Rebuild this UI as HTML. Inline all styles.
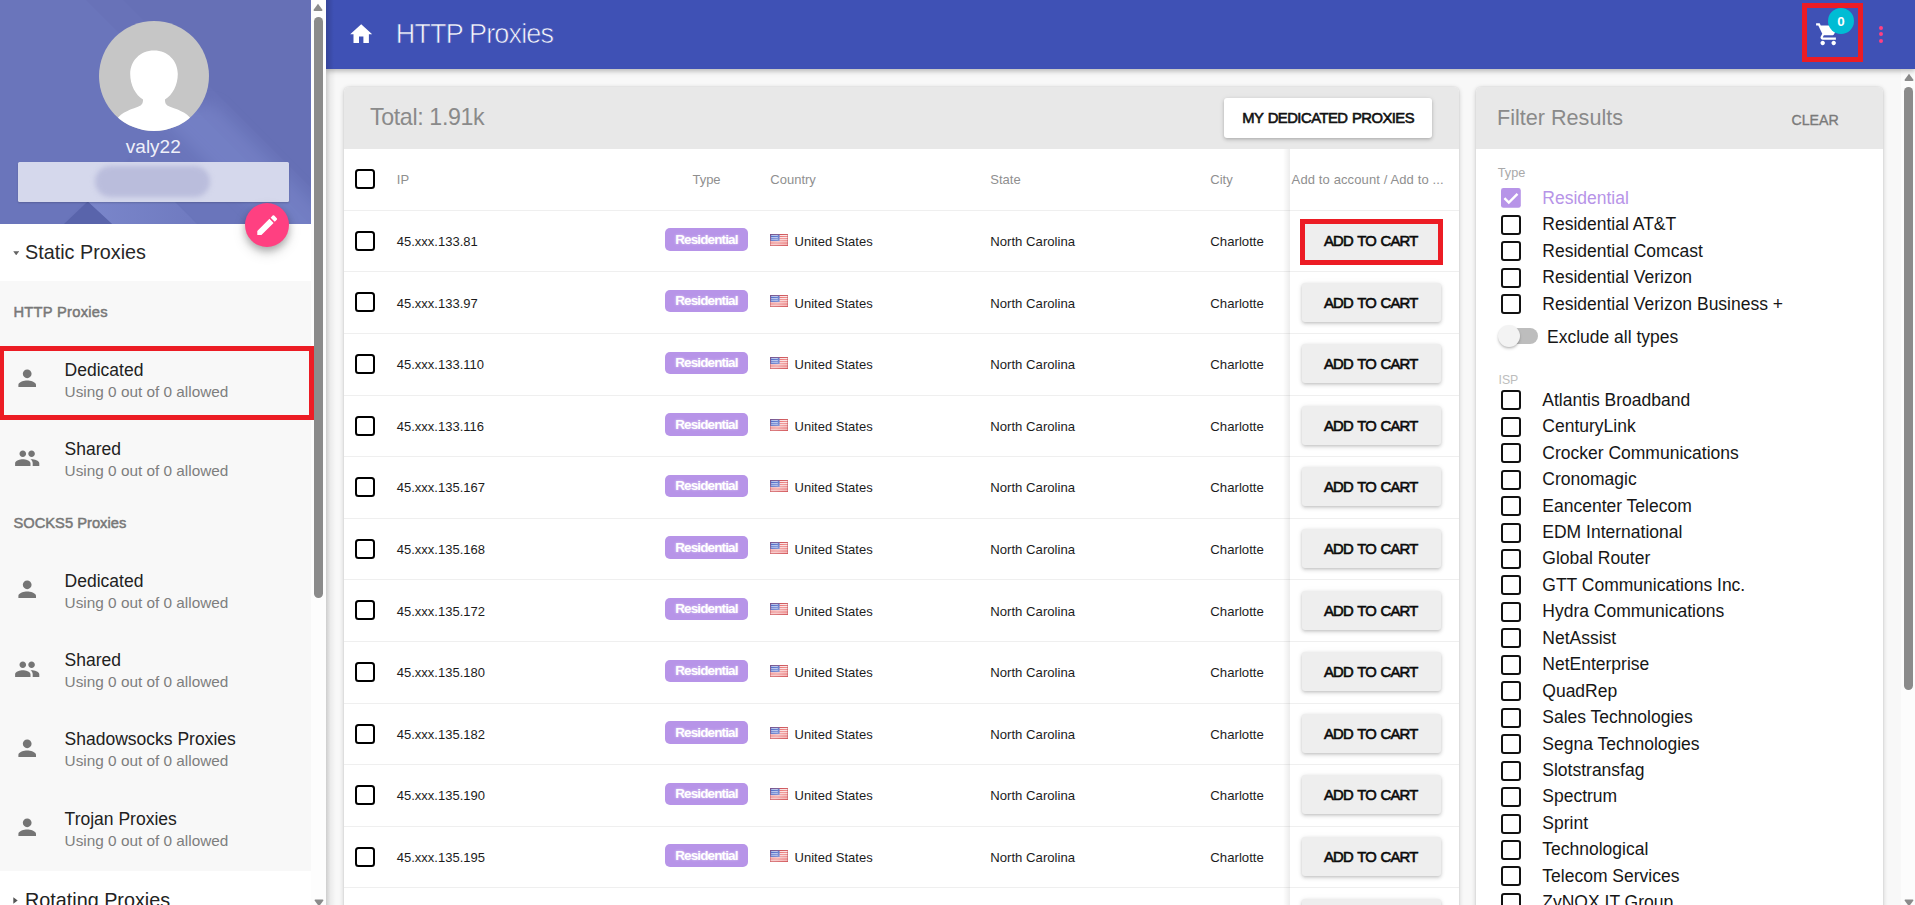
<!DOCTYPE html>
<html lang="en"><head><meta charset="utf-8"><title>HTTP Proxies</title>
<style>
html,body{margin:0;padding:0}
body{width:1915px;height:905px;overflow:hidden;position:relative;background:#fafafa;font-family:"Liberation Sans",Arial,sans-serif;}
div,svg{position:absolute;box-sizing:border-box}
.t{white-space:nowrap;line-height:1}
.m{-webkit-text-stroke:0.35px currentColor}
.m2{-webkit-text-stroke:0.5px currentColor}
.cb{width:19.6px;height:19.6px;border:2.3px solid #111;border-radius:3px;background:#fff}
.cbt{width:20px;height:20px;border:2.4px solid #000;border-radius:3.5px;background:#fff}
.btn{left:1301.5px;width:139px;height:39px;background:#eeeeee;border-radius:3px;box-shadow:0 2px 4px rgba(0,0,0,.15),0 1px 2.5px rgba(0,0,0,.09),0 0 6px rgba(0,0,0,.05)}
.badge{left:665px;width:83px;height:22.4px;background:#b794e8;border-radius:5px}
.sep{left:344px;width:1115px;height:1px;background:#efefef}
.red{border:5px solid #ec1c24}
</style></head><body>

<div style="left:326px;top:0;width:1589px;height:905px;background:#f8f8f8"></div>
<div style="left:326px;top:69px;width:10px;height:836px;background:linear-gradient(90deg,rgba(0,0,0,.17),rgba(0,0,0,.05) 45%,rgba(0,0,0,0))"></div>
<div style="left:344px;top:87px;width:1115px;height:830px;background:#fff;border-radius:5px 5px 0 0;box-shadow:0 1.5px 5px rgba(0,0,0,.2),0 0 1.5px rgba(0,0,0,.12);overflow:hidden"><div style="left:0;top:0;width:1115px;height:62px;background:#e8e8e8"></div></div>
<div class="t" style="top:106px;font-size:23.2px;color:#8a8a8a;left:370.00px;letter-spacing:-0.36px;">Total: 1.91k</div>
<div style="left:1224px;top:98px;width:208px;height:40px;background:#fff;border-radius:3px;box-shadow:0 2px 4px rgba(0,0,0,.15),0 1px 2.5px rgba(0,0,0,.09),0 0 6px rgba(0,0,0,.05)"></div>
<div class="t" style="top:111px;font-size:14.8px;color:#111;left:1328.20px;transform:translateX(-50%);letter-spacing:-0.52px;-webkit-text-stroke:0.6px #111;word-spacing:0.9px;">MY DEDICATED PROXIES</div>
<div class="cbt" style="left:355px;top:169px"></div>
<div class="t" style="top:173px;font-size:13px;color:#8f8f8f;left:396.80px;">IP</div>
<div class="t" style="top:173px;font-size:13px;color:#8f8f8f;left:706.50px;transform:translateX(-50%);">Type</div>
<div class="t" style="top:173px;font-size:13px;color:#8f8f8f;left:770.30px;">Country</div>
<div class="t" style="top:173px;font-size:13px;color:#8f8f8f;left:990.30px;">State</div>
<div class="t" style="top:173px;font-size:13px;color:#8f8f8f;left:1210.30px;">City</div>
<div class="t" style="top:173px;font-size:13px;color:#8f8f8f;left:1291.60px;letter-spacing:0.12px;">Add to account / Add to ...</div>
<div class="sep" style="top:210px"></div>
<div class="cbt" style="left:355px;top:231px"></div>
<div class="t" style="top:235px;font-size:13px;color:#1c1c1c;left:396.80px;">45.xxx.133.81</div>
<div class="badge" style="top:228.40px"></div>
<div class="t" style="top:233px;font-size:13.4px;color:#fff;left:706.40px;transform:translateX(-50%);font-weight:700;letter-spacing:-0.82px;text-shadow:0 0 2.5px rgba(255,255,255,.6)">Residential</div>
<svg style="left:770px;top:233.70px" width="18" height="12.2" viewBox="0 0 18 12.2"><defs><linearGradient id="fg0" x1="0" y1="0" x2="1" y2="1"><stop offset="0" stop-color="#fff" stop-opacity="0"/><stop offset=".55" stop-color="#fff" stop-opacity=".38"/><stop offset="1" stop-color="#fff" stop-opacity=".05"/></linearGradient></defs><rect width="18" height="12.2" fill="#fff"/><g fill="#e03535"><rect y="0" width="18" height="1.1"/><rect y="1.9" width="18" height="1"/><rect y="3.8" width="18" height="1"/><rect y="5.7" width="18" height="1"/><rect y="7.6" width="18" height="1"/><rect y="9.4" width="18" height="1"/><rect y="11.2" width="18" height="1"/></g><rect width="9.6" height="7" fill="#3f5ec2"/><g fill="#c9d3f2"><rect x="1.2" y="1.2" width="6.6" height=".8"/><rect x="1.2" y="3" width="6.6" height=".8"/><rect x="1.2" y="4.8" width="6.6" height=".8"/></g><rect width="18" height="12.2" fill="url(#fg0)"/><rect x=".4" y=".4" width="17.2" height="11.4" fill="none" stroke="#b34b55" stroke-opacity=".55" stroke-width=".8"/></svg>
<div class="t" style="top:235px;font-size:13px;color:#1c1c1c;left:794.60px;">United States</div>
<div class="t" style="top:235px;font-size:13.15px;color:#1c1c1c;left:990.30px;">North Carolina</div>
<div class="t" style="top:235px;font-size:13.2px;color:#1c1c1c;left:1210.30px;">Charlotte</div>
<div class="sep" style="top:271px"></div>
<div class="cbt" style="left:355px;top:292px"></div>
<div class="t" style="top:297px;font-size:13px;color:#1c1c1c;left:396.80px;">45.xxx.133.97</div>
<div class="badge" style="top:290.00px"></div>
<div class="t" style="top:294px;font-size:13.4px;color:#fff;left:706.40px;transform:translateX(-50%);font-weight:700;letter-spacing:-0.82px;text-shadow:0 0 2.5px rgba(255,255,255,.6)">Residential</div>
<svg style="left:770px;top:295.30px" width="18" height="12.2" viewBox="0 0 18 12.2"><defs><linearGradient id="fg1" x1="0" y1="0" x2="1" y2="1"><stop offset="0" stop-color="#fff" stop-opacity="0"/><stop offset=".55" stop-color="#fff" stop-opacity=".38"/><stop offset="1" stop-color="#fff" stop-opacity=".05"/></linearGradient></defs><rect width="18" height="12.2" fill="#fff"/><g fill="#e03535"><rect y="0" width="18" height="1.1"/><rect y="1.9" width="18" height="1"/><rect y="3.8" width="18" height="1"/><rect y="5.7" width="18" height="1"/><rect y="7.6" width="18" height="1"/><rect y="9.4" width="18" height="1"/><rect y="11.2" width="18" height="1"/></g><rect width="9.6" height="7" fill="#3f5ec2"/><g fill="#c9d3f2"><rect x="1.2" y="1.2" width="6.6" height=".8"/><rect x="1.2" y="3" width="6.6" height=".8"/><rect x="1.2" y="4.8" width="6.6" height=".8"/></g><rect width="18" height="12.2" fill="url(#fg1)"/><rect x=".4" y=".4" width="17.2" height="11.4" fill="none" stroke="#b34b55" stroke-opacity=".55" stroke-width=".8"/></svg>
<div class="t" style="top:297px;font-size:13px;color:#1c1c1c;left:794.60px;">United States</div>
<div class="t" style="top:297px;font-size:13.15px;color:#1c1c1c;left:990.30px;">North Carolina</div>
<div class="t" style="top:297px;font-size:13.2px;color:#1c1c1c;left:1210.30px;">Charlotte</div>
<div class="sep" style="top:333px"></div>
<div class="cbt" style="left:355px;top:354px"></div>
<div class="t" style="top:358px;font-size:13px;color:#1c1c1c;left:396.80px;">45.xxx.133.110</div>
<div class="badge" style="top:351.60px"></div>
<div class="t" style="top:356px;font-size:13.4px;color:#fff;left:706.40px;transform:translateX(-50%);font-weight:700;letter-spacing:-0.82px;text-shadow:0 0 2.5px rgba(255,255,255,.6)">Residential</div>
<svg style="left:770px;top:356.90px" width="18" height="12.2" viewBox="0 0 18 12.2"><defs><linearGradient id="fg2" x1="0" y1="0" x2="1" y2="1"><stop offset="0" stop-color="#fff" stop-opacity="0"/><stop offset=".55" stop-color="#fff" stop-opacity=".38"/><stop offset="1" stop-color="#fff" stop-opacity=".05"/></linearGradient></defs><rect width="18" height="12.2" fill="#fff"/><g fill="#e03535"><rect y="0" width="18" height="1.1"/><rect y="1.9" width="18" height="1"/><rect y="3.8" width="18" height="1"/><rect y="5.7" width="18" height="1"/><rect y="7.6" width="18" height="1"/><rect y="9.4" width="18" height="1"/><rect y="11.2" width="18" height="1"/></g><rect width="9.6" height="7" fill="#3f5ec2"/><g fill="#c9d3f2"><rect x="1.2" y="1.2" width="6.6" height=".8"/><rect x="1.2" y="3" width="6.6" height=".8"/><rect x="1.2" y="4.8" width="6.6" height=".8"/></g><rect width="18" height="12.2" fill="url(#fg2)"/><rect x=".4" y=".4" width="17.2" height="11.4" fill="none" stroke="#b34b55" stroke-opacity=".55" stroke-width=".8"/></svg>
<div class="t" style="top:358px;font-size:13px;color:#1c1c1c;left:794.60px;">United States</div>
<div class="t" style="top:358px;font-size:13.15px;color:#1c1c1c;left:990.30px;">North Carolina</div>
<div class="t" style="top:358px;font-size:13.2px;color:#1c1c1c;left:1210.30px;">Charlotte</div>
<div class="sep" style="top:395px"></div>
<div class="cbt" style="left:355px;top:416px"></div>
<div class="t" style="top:420px;font-size:13px;color:#1c1c1c;left:396.80px;">45.xxx.133.116</div>
<div class="badge" style="top:413.20px"></div>
<div class="t" style="top:418px;font-size:13.4px;color:#fff;left:706.40px;transform:translateX(-50%);font-weight:700;letter-spacing:-0.82px;text-shadow:0 0 2.5px rgba(255,255,255,.6)">Residential</div>
<svg style="left:770px;top:418.50px" width="18" height="12.2" viewBox="0 0 18 12.2"><defs><linearGradient id="fg3" x1="0" y1="0" x2="1" y2="1"><stop offset="0" stop-color="#fff" stop-opacity="0"/><stop offset=".55" stop-color="#fff" stop-opacity=".38"/><stop offset="1" stop-color="#fff" stop-opacity=".05"/></linearGradient></defs><rect width="18" height="12.2" fill="#fff"/><g fill="#e03535"><rect y="0" width="18" height="1.1"/><rect y="1.9" width="18" height="1"/><rect y="3.8" width="18" height="1"/><rect y="5.7" width="18" height="1"/><rect y="7.6" width="18" height="1"/><rect y="9.4" width="18" height="1"/><rect y="11.2" width="18" height="1"/></g><rect width="9.6" height="7" fill="#3f5ec2"/><g fill="#c9d3f2"><rect x="1.2" y="1.2" width="6.6" height=".8"/><rect x="1.2" y="3" width="6.6" height=".8"/><rect x="1.2" y="4.8" width="6.6" height=".8"/></g><rect width="18" height="12.2" fill="url(#fg3)"/><rect x=".4" y=".4" width="17.2" height="11.4" fill="none" stroke="#b34b55" stroke-opacity=".55" stroke-width=".8"/></svg>
<div class="t" style="top:420px;font-size:13px;color:#1c1c1c;left:794.60px;">United States</div>
<div class="t" style="top:420px;font-size:13.15px;color:#1c1c1c;left:990.30px;">North Carolina</div>
<div class="t" style="top:420px;font-size:13.2px;color:#1c1c1c;left:1210.30px;">Charlotte</div>
<div class="sep" style="top:456px"></div>
<div class="cbt" style="left:355px;top:477px"></div>
<div class="t" style="top:481px;font-size:13px;color:#1c1c1c;left:396.80px;">45.xxx.135.167</div>
<div class="badge" style="top:474.80px"></div>
<div class="t" style="top:479px;font-size:13.4px;color:#fff;left:706.40px;transform:translateX(-50%);font-weight:700;letter-spacing:-0.82px;text-shadow:0 0 2.5px rgba(255,255,255,.6)">Residential</div>
<svg style="left:770px;top:480.10px" width="18" height="12.2" viewBox="0 0 18 12.2"><defs><linearGradient id="fg4" x1="0" y1="0" x2="1" y2="1"><stop offset="0" stop-color="#fff" stop-opacity="0"/><stop offset=".55" stop-color="#fff" stop-opacity=".38"/><stop offset="1" stop-color="#fff" stop-opacity=".05"/></linearGradient></defs><rect width="18" height="12.2" fill="#fff"/><g fill="#e03535"><rect y="0" width="18" height="1.1"/><rect y="1.9" width="18" height="1"/><rect y="3.8" width="18" height="1"/><rect y="5.7" width="18" height="1"/><rect y="7.6" width="18" height="1"/><rect y="9.4" width="18" height="1"/><rect y="11.2" width="18" height="1"/></g><rect width="9.6" height="7" fill="#3f5ec2"/><g fill="#c9d3f2"><rect x="1.2" y="1.2" width="6.6" height=".8"/><rect x="1.2" y="3" width="6.6" height=".8"/><rect x="1.2" y="4.8" width="6.6" height=".8"/></g><rect width="18" height="12.2" fill="url(#fg4)"/><rect x=".4" y=".4" width="17.2" height="11.4" fill="none" stroke="#b34b55" stroke-opacity=".55" stroke-width=".8"/></svg>
<div class="t" style="top:481px;font-size:13px;color:#1c1c1c;left:794.60px;">United States</div>
<div class="t" style="top:481px;font-size:13.15px;color:#1c1c1c;left:990.30px;">North Carolina</div>
<div class="t" style="top:481px;font-size:13.2px;color:#1c1c1c;left:1210.30px;">Charlotte</div>
<div class="sep" style="top:518px"></div>
<div class="cbt" style="left:355px;top:539px"></div>
<div class="t" style="top:543px;font-size:13px;color:#1c1c1c;left:396.80px;">45.xxx.135.168</div>
<div class="badge" style="top:536.40px"></div>
<div class="t" style="top:541px;font-size:13.4px;color:#fff;left:706.40px;transform:translateX(-50%);font-weight:700;letter-spacing:-0.82px;text-shadow:0 0 2.5px rgba(255,255,255,.6)">Residential</div>
<svg style="left:770px;top:541.70px" width="18" height="12.2" viewBox="0 0 18 12.2"><defs><linearGradient id="fg5" x1="0" y1="0" x2="1" y2="1"><stop offset="0" stop-color="#fff" stop-opacity="0"/><stop offset=".55" stop-color="#fff" stop-opacity=".38"/><stop offset="1" stop-color="#fff" stop-opacity=".05"/></linearGradient></defs><rect width="18" height="12.2" fill="#fff"/><g fill="#e03535"><rect y="0" width="18" height="1.1"/><rect y="1.9" width="18" height="1"/><rect y="3.8" width="18" height="1"/><rect y="5.7" width="18" height="1"/><rect y="7.6" width="18" height="1"/><rect y="9.4" width="18" height="1"/><rect y="11.2" width="18" height="1"/></g><rect width="9.6" height="7" fill="#3f5ec2"/><g fill="#c9d3f2"><rect x="1.2" y="1.2" width="6.6" height=".8"/><rect x="1.2" y="3" width="6.6" height=".8"/><rect x="1.2" y="4.8" width="6.6" height=".8"/></g><rect width="18" height="12.2" fill="url(#fg5)"/><rect x=".4" y=".4" width="17.2" height="11.4" fill="none" stroke="#b34b55" stroke-opacity=".55" stroke-width=".8"/></svg>
<div class="t" style="top:543px;font-size:13px;color:#1c1c1c;left:794.60px;">United States</div>
<div class="t" style="top:543px;font-size:13.15px;color:#1c1c1c;left:990.30px;">North Carolina</div>
<div class="t" style="top:543px;font-size:13.2px;color:#1c1c1c;left:1210.30px;">Charlotte</div>
<div class="sep" style="top:579px"></div>
<div class="cbt" style="left:355px;top:600px"></div>
<div class="t" style="top:605px;font-size:13px;color:#1c1c1c;left:396.80px;">45.xxx.135.172</div>
<div class="badge" style="top:598.00px"></div>
<div class="t" style="top:602px;font-size:13.4px;color:#fff;left:706.40px;transform:translateX(-50%);font-weight:700;letter-spacing:-0.82px;text-shadow:0 0 2.5px rgba(255,255,255,.6)">Residential</div>
<svg style="left:770px;top:603.30px" width="18" height="12.2" viewBox="0 0 18 12.2"><defs><linearGradient id="fg6" x1="0" y1="0" x2="1" y2="1"><stop offset="0" stop-color="#fff" stop-opacity="0"/><stop offset=".55" stop-color="#fff" stop-opacity=".38"/><stop offset="1" stop-color="#fff" stop-opacity=".05"/></linearGradient></defs><rect width="18" height="12.2" fill="#fff"/><g fill="#e03535"><rect y="0" width="18" height="1.1"/><rect y="1.9" width="18" height="1"/><rect y="3.8" width="18" height="1"/><rect y="5.7" width="18" height="1"/><rect y="7.6" width="18" height="1"/><rect y="9.4" width="18" height="1"/><rect y="11.2" width="18" height="1"/></g><rect width="9.6" height="7" fill="#3f5ec2"/><g fill="#c9d3f2"><rect x="1.2" y="1.2" width="6.6" height=".8"/><rect x="1.2" y="3" width="6.6" height=".8"/><rect x="1.2" y="4.8" width="6.6" height=".8"/></g><rect width="18" height="12.2" fill="url(#fg6)"/><rect x=".4" y=".4" width="17.2" height="11.4" fill="none" stroke="#b34b55" stroke-opacity=".55" stroke-width=".8"/></svg>
<div class="t" style="top:605px;font-size:13px;color:#1c1c1c;left:794.60px;">United States</div>
<div class="t" style="top:605px;font-size:13.15px;color:#1c1c1c;left:990.30px;">North Carolina</div>
<div class="t" style="top:605px;font-size:13.2px;color:#1c1c1c;left:1210.30px;">Charlotte</div>
<div class="sep" style="top:641px"></div>
<div class="cbt" style="left:355px;top:662px"></div>
<div class="t" style="top:666px;font-size:13px;color:#1c1c1c;left:396.80px;">45.xxx.135.180</div>
<div class="badge" style="top:659.60px"></div>
<div class="t" style="top:664px;font-size:13.4px;color:#fff;left:706.40px;transform:translateX(-50%);font-weight:700;letter-spacing:-0.82px;text-shadow:0 0 2.5px rgba(255,255,255,.6)">Residential</div>
<svg style="left:770px;top:664.90px" width="18" height="12.2" viewBox="0 0 18 12.2"><defs><linearGradient id="fg7" x1="0" y1="0" x2="1" y2="1"><stop offset="0" stop-color="#fff" stop-opacity="0"/><stop offset=".55" stop-color="#fff" stop-opacity=".38"/><stop offset="1" stop-color="#fff" stop-opacity=".05"/></linearGradient></defs><rect width="18" height="12.2" fill="#fff"/><g fill="#e03535"><rect y="0" width="18" height="1.1"/><rect y="1.9" width="18" height="1"/><rect y="3.8" width="18" height="1"/><rect y="5.7" width="18" height="1"/><rect y="7.6" width="18" height="1"/><rect y="9.4" width="18" height="1"/><rect y="11.2" width="18" height="1"/></g><rect width="9.6" height="7" fill="#3f5ec2"/><g fill="#c9d3f2"><rect x="1.2" y="1.2" width="6.6" height=".8"/><rect x="1.2" y="3" width="6.6" height=".8"/><rect x="1.2" y="4.8" width="6.6" height=".8"/></g><rect width="18" height="12.2" fill="url(#fg7)"/><rect x=".4" y=".4" width="17.2" height="11.4" fill="none" stroke="#b34b55" stroke-opacity=".55" stroke-width=".8"/></svg>
<div class="t" style="top:666px;font-size:13px;color:#1c1c1c;left:794.60px;">United States</div>
<div class="t" style="top:666px;font-size:13.15px;color:#1c1c1c;left:990.30px;">North Carolina</div>
<div class="t" style="top:666px;font-size:13.2px;color:#1c1c1c;left:1210.30px;">Charlotte</div>
<div class="sep" style="top:703px"></div>
<div class="cbt" style="left:355px;top:724px"></div>
<div class="t" style="top:728px;font-size:13px;color:#1c1c1c;left:396.80px;">45.xxx.135.182</div>
<div class="badge" style="top:721.20px"></div>
<div class="t" style="top:726px;font-size:13.4px;color:#fff;left:706.40px;transform:translateX(-50%);font-weight:700;letter-spacing:-0.82px;text-shadow:0 0 2.5px rgba(255,255,255,.6)">Residential</div>
<svg style="left:770px;top:726.50px" width="18" height="12.2" viewBox="0 0 18 12.2"><defs><linearGradient id="fg8" x1="0" y1="0" x2="1" y2="1"><stop offset="0" stop-color="#fff" stop-opacity="0"/><stop offset=".55" stop-color="#fff" stop-opacity=".38"/><stop offset="1" stop-color="#fff" stop-opacity=".05"/></linearGradient></defs><rect width="18" height="12.2" fill="#fff"/><g fill="#e03535"><rect y="0" width="18" height="1.1"/><rect y="1.9" width="18" height="1"/><rect y="3.8" width="18" height="1"/><rect y="5.7" width="18" height="1"/><rect y="7.6" width="18" height="1"/><rect y="9.4" width="18" height="1"/><rect y="11.2" width="18" height="1"/></g><rect width="9.6" height="7" fill="#3f5ec2"/><g fill="#c9d3f2"><rect x="1.2" y="1.2" width="6.6" height=".8"/><rect x="1.2" y="3" width="6.6" height=".8"/><rect x="1.2" y="4.8" width="6.6" height=".8"/></g><rect width="18" height="12.2" fill="url(#fg8)"/><rect x=".4" y=".4" width="17.2" height="11.4" fill="none" stroke="#b34b55" stroke-opacity=".55" stroke-width=".8"/></svg>
<div class="t" style="top:728px;font-size:13px;color:#1c1c1c;left:794.60px;">United States</div>
<div class="t" style="top:728px;font-size:13.15px;color:#1c1c1c;left:990.30px;">North Carolina</div>
<div class="t" style="top:728px;font-size:13.2px;color:#1c1c1c;left:1210.30px;">Charlotte</div>
<div class="sep" style="top:764px"></div>
<div class="cbt" style="left:355px;top:785px"></div>
<div class="t" style="top:789px;font-size:13px;color:#1c1c1c;left:396.80px;">45.xxx.135.190</div>
<div class="badge" style="top:782.80px"></div>
<div class="t" style="top:787px;font-size:13.4px;color:#fff;left:706.40px;transform:translateX(-50%);font-weight:700;letter-spacing:-0.82px;text-shadow:0 0 2.5px rgba(255,255,255,.6)">Residential</div>
<svg style="left:770px;top:788.10px" width="18" height="12.2" viewBox="0 0 18 12.2"><defs><linearGradient id="fg9" x1="0" y1="0" x2="1" y2="1"><stop offset="0" stop-color="#fff" stop-opacity="0"/><stop offset=".55" stop-color="#fff" stop-opacity=".38"/><stop offset="1" stop-color="#fff" stop-opacity=".05"/></linearGradient></defs><rect width="18" height="12.2" fill="#fff"/><g fill="#e03535"><rect y="0" width="18" height="1.1"/><rect y="1.9" width="18" height="1"/><rect y="3.8" width="18" height="1"/><rect y="5.7" width="18" height="1"/><rect y="7.6" width="18" height="1"/><rect y="9.4" width="18" height="1"/><rect y="11.2" width="18" height="1"/></g><rect width="9.6" height="7" fill="#3f5ec2"/><g fill="#c9d3f2"><rect x="1.2" y="1.2" width="6.6" height=".8"/><rect x="1.2" y="3" width="6.6" height=".8"/><rect x="1.2" y="4.8" width="6.6" height=".8"/></g><rect width="18" height="12.2" fill="url(#fg9)"/><rect x=".4" y=".4" width="17.2" height="11.4" fill="none" stroke="#b34b55" stroke-opacity=".55" stroke-width=".8"/></svg>
<div class="t" style="top:789px;font-size:13px;color:#1c1c1c;left:794.60px;">United States</div>
<div class="t" style="top:789px;font-size:13.15px;color:#1c1c1c;left:990.30px;">North Carolina</div>
<div class="t" style="top:789px;font-size:13.2px;color:#1c1c1c;left:1210.30px;">Charlotte</div>
<div class="sep" style="top:826px"></div>
<div class="cbt" style="left:355px;top:847px"></div>
<div class="t" style="top:851px;font-size:13px;color:#1c1c1c;left:396.80px;">45.xxx.135.195</div>
<div class="badge" style="top:844.40px"></div>
<div class="t" style="top:849px;font-size:13.4px;color:#fff;left:706.40px;transform:translateX(-50%);font-weight:700;letter-spacing:-0.82px;text-shadow:0 0 2.5px rgba(255,255,255,.6)">Residential</div>
<svg style="left:770px;top:849.70px" width="18" height="12.2" viewBox="0 0 18 12.2"><defs><linearGradient id="fg10" x1="0" y1="0" x2="1" y2="1"><stop offset="0" stop-color="#fff" stop-opacity="0"/><stop offset=".55" stop-color="#fff" stop-opacity=".38"/><stop offset="1" stop-color="#fff" stop-opacity=".05"/></linearGradient></defs><rect width="18" height="12.2" fill="#fff"/><g fill="#e03535"><rect y="0" width="18" height="1.1"/><rect y="1.9" width="18" height="1"/><rect y="3.8" width="18" height="1"/><rect y="5.7" width="18" height="1"/><rect y="7.6" width="18" height="1"/><rect y="9.4" width="18" height="1"/><rect y="11.2" width="18" height="1"/></g><rect width="9.6" height="7" fill="#3f5ec2"/><g fill="#c9d3f2"><rect x="1.2" y="1.2" width="6.6" height=".8"/><rect x="1.2" y="3" width="6.6" height=".8"/><rect x="1.2" y="4.8" width="6.6" height=".8"/></g><rect width="18" height="12.2" fill="url(#fg10)"/><rect x=".4" y=".4" width="17.2" height="11.4" fill="none" stroke="#b34b55" stroke-opacity=".55" stroke-width=".8"/></svg>
<div class="t" style="top:851px;font-size:13px;color:#1c1c1c;left:794.60px;">United States</div>
<div class="t" style="top:851px;font-size:13.15px;color:#1c1c1c;left:990.30px;">North Carolina</div>
<div class="t" style="top:851px;font-size:13.2px;color:#1c1c1c;left:1210.30px;">Charlotte</div>
<div class="sep" style="top:887px"></div>
<div class="cbt" style="left:355px;top:908px"></div>
<div class="t" style="top:913px;font-size:13px;color:#1c1c1c;left:396.80px;">45.xxx.135.201</div>
<div class="badge" style="top:906.00px"></div>
<div class="t" style="top:910px;font-size:13.4px;color:#fff;left:706.40px;transform:translateX(-50%);font-weight:700;letter-spacing:-0.82px;text-shadow:0 0 2.5px rgba(255,255,255,.6)">Residential</div>
<svg style="left:770px;top:911.30px" width="18" height="12.2" viewBox="0 0 18 12.2"><defs><linearGradient id="fg11" x1="0" y1="0" x2="1" y2="1"><stop offset="0" stop-color="#fff" stop-opacity="0"/><stop offset=".55" stop-color="#fff" stop-opacity=".38"/><stop offset="1" stop-color="#fff" stop-opacity=".05"/></linearGradient></defs><rect width="18" height="12.2" fill="#fff"/><g fill="#e03535"><rect y="0" width="18" height="1.1"/><rect y="1.9" width="18" height="1"/><rect y="3.8" width="18" height="1"/><rect y="5.7" width="18" height="1"/><rect y="7.6" width="18" height="1"/><rect y="9.4" width="18" height="1"/><rect y="11.2" width="18" height="1"/></g><rect width="9.6" height="7" fill="#3f5ec2"/><g fill="#c9d3f2"><rect x="1.2" y="1.2" width="6.6" height=".8"/><rect x="1.2" y="3" width="6.6" height=".8"/><rect x="1.2" y="4.8" width="6.6" height=".8"/></g><rect width="18" height="12.2" fill="url(#fg11)"/><rect x=".4" y=".4" width="17.2" height="11.4" fill="none" stroke="#b34b55" stroke-opacity=".55" stroke-width=".8"/></svg>
<div class="t" style="top:913px;font-size:13px;color:#1c1c1c;left:794.60px;">United States</div>
<div class="t" style="top:913px;font-size:13.15px;color:#1c1c1c;left:990.30px;">North Carolina</div>
<div class="t" style="top:913px;font-size:13.2px;color:#1c1c1c;left:1210.30px;">Charlotte</div>
<div style="left:1283px;top:149px;width:7px;height:760px;background:linear-gradient(90deg,rgba(0,0,0,0),rgba(0,0,0,.075))"></div>
<div style="left:1290px;top:149px;width:169px;height:760px;background:#fff"></div>
<div class="t" style="top:173px;font-size:13px;color:#8f8f8f;left:1291.60px;letter-spacing:0.12px;">Add to account / Add to ...</div>
<div class="sep" style="top:210px;left:1290px;width:169px"></div>
<div style="left:1305px;top:224px;width:133px;height:36px;background:#eee"></div>
<div class="red" style="left:1300px;top:219px;width:143px;height:46px"></div>
<div class="t" style="top:234px;font-size:14.8px;color:#0a0a0a;left:1370.80px;transform:translateX(-50%);letter-spacing:-0.68px;-webkit-text-stroke:0.6px #0a0a0a;word-spacing:0.9px;">ADD TO CART</div>
<div class="sep" style="top:271px;left:1290px;width:169px"></div>
<div class="btn" style="top:282.60px"></div>
<div class="t" style="top:296px;font-size:14.8px;color:#0a0a0a;left:1370.80px;transform:translateX(-50%);letter-spacing:-0.68px;-webkit-text-stroke:0.6px #0a0a0a;word-spacing:0.9px;">ADD TO CART</div>
<div class="sep" style="top:333px;left:1290px;width:169px"></div>
<div class="btn" style="top:344.20px"></div>
<div class="t" style="top:357px;font-size:14.8px;color:#0a0a0a;left:1370.80px;transform:translateX(-50%);letter-spacing:-0.68px;-webkit-text-stroke:0.6px #0a0a0a;word-spacing:0.9px;">ADD TO CART</div>
<div class="sep" style="top:395px;left:1290px;width:169px"></div>
<div class="btn" style="top:405.80px"></div>
<div class="t" style="top:419px;font-size:14.8px;color:#0a0a0a;left:1370.80px;transform:translateX(-50%);letter-spacing:-0.68px;-webkit-text-stroke:0.6px #0a0a0a;word-spacing:0.9px;">ADD TO CART</div>
<div class="sep" style="top:456px;left:1290px;width:169px"></div>
<div class="btn" style="top:467.40px"></div>
<div class="t" style="top:480px;font-size:14.8px;color:#0a0a0a;left:1370.80px;transform:translateX(-50%);letter-spacing:-0.68px;-webkit-text-stroke:0.6px #0a0a0a;word-spacing:0.9px;">ADD TO CART</div>
<div class="sep" style="top:518px;left:1290px;width:169px"></div>
<div class="btn" style="top:529.00px"></div>
<div class="t" style="top:542px;font-size:14.8px;color:#0a0a0a;left:1370.80px;transform:translateX(-50%);letter-spacing:-0.68px;-webkit-text-stroke:0.6px #0a0a0a;word-spacing:0.9px;">ADD TO CART</div>
<div class="sep" style="top:579px;left:1290px;width:169px"></div>
<div class="btn" style="top:590.60px"></div>
<div class="t" style="top:604px;font-size:14.8px;color:#0a0a0a;left:1370.80px;transform:translateX(-50%);letter-spacing:-0.68px;-webkit-text-stroke:0.6px #0a0a0a;word-spacing:0.9px;">ADD TO CART</div>
<div class="sep" style="top:641px;left:1290px;width:169px"></div>
<div class="btn" style="top:652.20px"></div>
<div class="t" style="top:665px;font-size:14.8px;color:#0a0a0a;left:1370.80px;transform:translateX(-50%);letter-spacing:-0.68px;-webkit-text-stroke:0.6px #0a0a0a;word-spacing:0.9px;">ADD TO CART</div>
<div class="sep" style="top:703px;left:1290px;width:169px"></div>
<div class="btn" style="top:713.80px"></div>
<div class="t" style="top:727px;font-size:14.8px;color:#0a0a0a;left:1370.80px;transform:translateX(-50%);letter-spacing:-0.68px;-webkit-text-stroke:0.6px #0a0a0a;word-spacing:0.9px;">ADD TO CART</div>
<div class="sep" style="top:764px;left:1290px;width:169px"></div>
<div class="btn" style="top:775.40px"></div>
<div class="t" style="top:788px;font-size:14.8px;color:#0a0a0a;left:1370.80px;transform:translateX(-50%);letter-spacing:-0.68px;-webkit-text-stroke:0.6px #0a0a0a;word-spacing:0.9px;">ADD TO CART</div>
<div class="sep" style="top:826px;left:1290px;width:169px"></div>
<div class="btn" style="top:837.00px"></div>
<div class="t" style="top:850px;font-size:14.8px;color:#0a0a0a;left:1370.80px;transform:translateX(-50%);letter-spacing:-0.68px;-webkit-text-stroke:0.6px #0a0a0a;word-spacing:0.9px;">ADD TO CART</div>
<div class="sep" style="top:887px;left:1290px;width:169px"></div>
<div class="btn" style="top:898.60px"></div>
<div class="t" style="top:912px;font-size:14.8px;color:#0a0a0a;left:1370.80px;transform:translateX(-50%);letter-spacing:-0.68px;-webkit-text-stroke:0.6px #0a0a0a;word-spacing:0.9px;">ADD TO CART</div>
<div style="left:1476px;top:87px;width:407px;height:830px;background:#fff;border-radius:5px 5px 0 0;box-shadow:0 1.5px 5px rgba(0,0,0,.2),0 0 1.5px rgba(0,0,0,.12);overflow:hidden"><div style="left:0;top:0;width:408px;height:62px;background:#e8e8e8"></div></div>
<div class="t" style="top:107px;font-size:21.6px;color:#8a8a8a;left:1497.00px;">Filter Results</div>
<div class="t m" style="top:113px;font-size:14.2px;color:#7a7a7a;left:1791.40px;">CLEAR</div>
<div class="t" style="top:167px;font-size:12.7px;color:#a9a9a9;left:1497.80px;">Type</div>
<svg style="left:1501.2px;top:188.20px" width="19.8" height="19.8" viewBox="0 0 18 18"><rect width="18" height="18" rx="2.2" fill="#b794e8"/><path d="M3.1 9.2 L7.1 13.2 L15 5.3" fill="none" stroke="#fff" stroke-width="2.2"/></svg>
<div class="t" style="top:190px;font-size:17.5px;color:#b794e8;left:1542.30px;">Residential</div>
<div class="cb" style="left:1501.2px;top:215px"></div>
<div class="t" style="top:216px;font-size:17.5px;color:#161616;left:1542.30px;">Residential AT&amp;T</div>
<div class="cb" style="left:1501.2px;top:241px"></div>
<div class="t" style="top:243px;font-size:17.5px;color:#161616;left:1542.30px;">Residential Comcast</div>
<div class="cb" style="left:1501.2px;top:268px"></div>
<div class="t" style="top:269px;font-size:17.5px;color:#161616;left:1542.30px;">Residential Verizon</div>
<div class="cb" style="left:1501.2px;top:294px"></div>
<div class="t" style="top:296px;font-size:17.5px;color:#161616;left:1542.30px;">Residential Verizon Business +</div>
<div style="left:1502px;top:328px;width:36.3px;height:16px;border-radius:8px;background:#bdbdbd"></div>
<div style="left:1498px;top:325px;width:22px;height:22px;border-radius:11px;background:#f3f3f3;box-shadow:0 2px 3px rgba(0,0,0,.16),0 1px 1.5px rgba(0,0,0,.12)"></div>
<div class="t" style="top:329px;font-size:17.5px;color:#161616;left:1547.00px;">Exclude all types</div>
<div class="t" style="top:374px;font-size:12.3px;color:#bdbdbd;left:1498.50px;">ISP</div>
<div class="cb" style="left:1501.2px;top:390px"></div>
<div class="t" style="top:392px;font-size:17.5px;color:#161616;left:1542.30px;">Atlantis Broadband</div>
<div class="cb" style="left:1501.2px;top:417px"></div>
<div class="t" style="top:418px;font-size:17.5px;color:#161616;left:1542.30px;">CenturyLink</div>
<div class="cb" style="left:1501.2px;top:443px"></div>
<div class="t" style="top:445px;font-size:17.5px;color:#161616;left:1542.30px;">Crocker Communications</div>
<div class="cb" style="left:1501.2px;top:470px"></div>
<div class="t" style="top:471px;font-size:17.5px;color:#161616;left:1542.30px;">Cronomagic</div>
<div class="cb" style="left:1501.2px;top:496px"></div>
<div class="t" style="top:498px;font-size:17.5px;color:#161616;left:1542.30px;">Eancenter Telecom</div>
<div class="cb" style="left:1501.2px;top:523px"></div>
<div class="t" style="top:524px;font-size:17.5px;color:#161616;left:1542.30px;">EDM International</div>
<div class="cb" style="left:1501.2px;top:549px"></div>
<div class="t" style="top:550px;font-size:17.5px;color:#161616;left:1542.30px;">Global Router</div>
<div class="cb" style="left:1501.2px;top:575px"></div>
<div class="t" style="top:577px;font-size:17.5px;color:#161616;left:1542.30px;">GTT Communications Inc.</div>
<div class="cb" style="left:1501.2px;top:602px"></div>
<div class="t" style="top:603px;font-size:17.5px;color:#161616;left:1542.30px;">Hydra Communications</div>
<div class="cb" style="left:1501.2px;top:628px"></div>
<div class="t" style="top:630px;font-size:17.5px;color:#161616;left:1542.30px;">NetAssist</div>
<div class="cb" style="left:1501.2px;top:655px"></div>
<div class="t" style="top:656px;font-size:17.5px;color:#161616;left:1542.30px;">NetEnterprise</div>
<div class="cb" style="left:1501.2px;top:681px"></div>
<div class="t" style="top:683px;font-size:17.5px;color:#161616;left:1542.30px;">QuadRep</div>
<div class="cb" style="left:1501.2px;top:708px"></div>
<div class="t" style="top:709px;font-size:17.5px;color:#161616;left:1542.30px;">Sales Technologies</div>
<div class="cb" style="left:1501.2px;top:734px"></div>
<div class="t" style="top:736px;font-size:17.5px;color:#161616;left:1542.30px;">Segna Technologies</div>
<div class="cb" style="left:1501.2px;top:761px"></div>
<div class="t" style="top:762px;font-size:17.5px;color:#161616;left:1542.30px;">Slotstransfag</div>
<div class="cb" style="left:1501.2px;top:787px"></div>
<div class="t" style="top:788px;font-size:17.5px;color:#161616;left:1542.30px;">Spectrum</div>
<div class="cb" style="left:1501.2px;top:814px"></div>
<div class="t" style="top:815px;font-size:17.5px;color:#161616;left:1542.30px;">Sprint</div>
<div class="cb" style="left:1501.2px;top:840px"></div>
<div class="t" style="top:841px;font-size:17.5px;color:#161616;left:1542.30px;">Technological</div>
<div class="cb" style="left:1501.2px;top:866px"></div>
<div class="t" style="top:868px;font-size:17.5px;color:#161616;left:1542.30px;">Telecom Services</div>
<div class="cb" style="left:1501.2px;top:893px"></div>
<div class="t" style="top:894px;font-size:17.5px;color:#161616;left:1542.30px;">ZyNOX IT Group</div>
<div style="left:1900.5px;top:69px;width:14.5px;height:836px;background:#fcfcfc"></div>
<div style="left:1904px;top:87px;width:9px;height:603px;border-radius:4.5px;background:#8b8b8b"></div>
<svg style="left:1903.8px;top:72.8px" width="10" height="8.4" viewBox="0 0 10 8" preserveAspectRatio="none"><path d="M5 .6 L9.4 6.4 Q9.6 7.6 8.6 7.6 L1.4 7.6 Q.4 7.6 .6 6.4 Z" fill="#8b8b8b"/></svg>
<svg style="left:1903.5px;top:899px" width="10" height="8" viewBox="0 0 10 8"><path d="M5 7.4 L9.4 1.6 Q9.6 .4 8.6 .4 L1.4 .4 Q.4 .4 .6 1.6 Z" fill="#8b8b8b"/></svg>
<div style="left:326px;top:0;width:1589px;height:69px;background:#3f51b5;box-shadow:0 2px 4px rgba(0,0,0,.19),0 4px 6px rgba(0,0,0,.07)"></div>
<div style="left:326px;top:0;width:8px;height:69px;background:linear-gradient(90deg,rgba(0,0,0,.16),rgba(0,0,0,0))"></div>
<svg style="left:348px;top:21px" width="26.4" height="26.4" viewBox="0 0 24 24"><path d="M10 20v-6h4v6h5v-8h3L12 3 2 12h3v8z" fill="#fff"/></svg>
<div class="t" style="top:21px;font-size:27px;color:#f6f7fc;left:395.80px;letter-spacing:-0.85px;-webkit-text-stroke:0.62px #3f51b5;">HTTP Proxies</div>
<svg style="left:1814.8px;top:20.8px" width="26.4" height="26.4" viewBox="0 0 24 24"><path d="M7 18c-1.1 0-1.99.9-1.99 2S5.9 22 7 22s2-.9 2-2-.9-2-2-2zM1 2v2h2l3.6 7.59-1.35 2.45c-.16.28-.25.61-.25.96 0 1.1.9 2 2 2h12v-2H7.42c-.14 0-.25-.11-.25-.25l.03-.12.9-1.63h7.45c.75 0 1.41-.41 1.75-1.03l3.58-6.49A1.003 1.003 0 0 0 20 4H5.21l-.94-2H1zm16 16c-1.1 0-1.99.9-1.99 2s.89 2 1.99 2 2-.9 2-2-.9-2-2-2z" fill="#fff"/></svg>
<div style="left:1828px;top:8px;width:26px;height:26px;border-radius:13px;background:#00bcd4"></div>
<div class="t" style="top:15px;font-size:13.4px;color:#fff;left:1841.00px;transform:translateX(-50%);font-weight:700;">0</div>
<div class="red" style="left:1802px;top:3px;width:61px;height:59px"></div>
<div style="left:1878.85px;top:25.55px;width:4.3px;height:4.3px;border-radius:50%;background:#ff4081"></div>
<div style="left:1878.85px;top:32.15px;width:4.3px;height:4.3px;border-radius:50%;background:#ff4081"></div>
<div style="left:1878.85px;top:38.75px;width:4.3px;height:4.3px;border-radius:50%;background:#ff4081"></div>
<div style="left:0;top:0;width:311px;height:905px;background:#f8f8f8"></div>
<svg style="left:0;top:0" width="311" height="224" viewBox="0 0 311 224">
<defs><filter id="bl" x="-20%" y="-20%" width="140%" height="140%"><feGaussianBlur stdDeviation="7"/></filter>
<filter id="bl2" x="-20%" y="-20%" width="140%" height="140%"><feGaussianBlur stdDeviation="1.2"/></filter>
<linearGradient id="lg1" x1="0" y1="0" x2="1" y2="0"><stop offset="0" stop-color="#7c88cc"/><stop offset="1" stop-color="#707bc1"/></linearGradient></defs>
<rect width="311" height="224" fill="#6a75bb"/>
<polygon points="86,0 311,0 311,225" fill="#6872b8"/>
<polygon points="123,0 311,0 311,188" fill="#6670b6"/>
<polygon points="150,105 215,105 345,235 280,235" fill="#7d89cd" opacity=".5" filter="url(#bl)"/>
<polygon points="130,157 197,224 63,224" fill="#6670b7" opacity=".55" filter="url(#bl2)"/>
<polygon points="88,202 175,202 197,224 112,224" fill="url(#lg1)" opacity=".9"/>
<polygon points="87.700,201.500 112,224 64,224" fill="#5964ab"/>
</svg>
<svg style="left:98.8px;top:20.8px" width="110" height="110" viewBox="0 0 110 110">
<defs><clipPath id="av"><circle cx="55" cy="55" r="55"/></clipPath></defs>
<circle cx="55" cy="55" r="55" fill="#c6c6c6"/>
<g clip-path="url(#av)" fill="#fff">
<path d="M55 29.5 C69 29.5 78.8 40 78.8 53 C78.8 64 73.5 74 66 78.5 C66 82 66.5 84 71 85.8 C82 89.5 90 93 95 102 L95 112 L15 112 L15 102 C20 93 28 89.5 39 85.8 C43.500 84 44 82 44 78.5 C36.500 74 31.200 64 31.200 53 C31.200 40 41 29.500 55 29.500 Z"/>
</g></svg>
<div class="t" style="top:137px;font-size:19px;color:#eff0f9;left:153.30px;transform:translateX(-50%);">valy22</div>
<div style="left:18px;top:162px;width:271px;height:40px;background:#d5d8ec;border-radius:1.5px;box-shadow:0 1px 2px rgba(0,0,0,.18)"></div>
<div style="left:95px;top:166px;width:115px;height:31px;border-radius:15.5px;background:#babddc;filter:blur(2.6px)"></div>
<div style="left:0;top:224px;width:311px;height:57px;background:#fff"></div>
<svg style="left:13px;top:250.8px" width="6.4" height="4.6" viewBox="0 0 7 5"><path d="M.3 .3 L6.7 .3 L3.5 4.7 Z" fill="#636363"/></svg>
<div class="t" style="top:243px;font-size:19.8px;color:#272727;left:25.00px;">Static Proxies</div>
<div style="left:245px;top:203px;width:44px;height:44px;border-radius:22px;background:#ff4081;box-shadow:0 4px 7px rgba(0,0,0,.24),0 6px 14px rgba(0,0,0,.14)"></div>
<svg style="left:253.7px;top:211.7px" width="26.4" height="26.4" viewBox="0 0 24 24"><path d="M3 17.25V21h3.75L17.81 9.94l-3.75-3.75L3 17.25zM20.71 7.04a.996.996 0 0 0 0-1.41l-2.34-2.34a.996.996 0 0 0-1.41 0l-1.83 1.83 3.75 3.75 1.83-1.83z" fill="#fff"/></svg>
<div class="t m2" style="top:305px;font-size:14.7px;color:#787878;left:13.40px;letter-spacing:0.28px;">HTTP Proxies</div>
<svg style="left:13.6px;top:365.30px" width="26.4" height="26.4" viewBox="0 0 24 24"><path d="M12 12c2.21 0 4-1.79 4-4s-1.79-4-4-4-4 1.79-4 4 1.79 4 4 4zm0 2c-2.67 0-8 1.34-8 4v2h16v-2c0-2.66-5.33-4-8-4z" fill="#757575"/></svg>
<div class="t" style="top:362px;font-size:17.5px;color:#212121;left:64.60px;">Dedicated</div>
<div class="t" style="top:384px;font-size:15.35px;color:#7e7e7e;left:64.60px;">Using 0 out of 0 allowed</div>
<svg style="left:13.9px;top:444.50px" width="26.4" height="26.4" viewBox="0 0 24 24"><path d="M16 11c1.66 0 2.99-1.34 2.99-3S17.66 5 16 5c-1.66 0-3 1.34-3 3s1.34 3 3 3zm-8 0c1.66 0 2.99-1.34 2.99-3S9.66 5 8 5C6.34 5 5 6.34 5 8s1.34 3 3 3zm0 2c-2.33 0-7 1.17-7 3.500V19h14v-2.500c0-2.330-4.670-3.500-7-3.500zm8 0c-.29 0-.62.02-.97.05 1.16.84 1.970 1.970 1.970 3.450V19h6v-2.500c0-2.330-4.670-3.500-7-3.500z" fill="#757575"/></svg>
<div class="t" style="top:441px;font-size:17.5px;color:#212121;left:64.60px;">Shared</div>
<div class="t" style="top:463px;font-size:15.35px;color:#7e7e7e;left:64.60px;">Using 0 out of 0 allowed</div>
<div class="t m2" style="top:516px;font-size:14.7px;color:#787878;left:13.40px;letter-spacing:0.02px;">SOCKS5 Proxies</div>
<svg style="left:13.6px;top:576.30px" width="26.4" height="26.4" viewBox="0 0 24 24"><path d="M12 12c2.21 0 4-1.79 4-4s-1.79-4-4-4-4 1.79-4 4 1.79 4 4 4zm0 2c-2.67 0-8 1.34-8 4v2h16v-2c0-2.66-5.33-4-8-4z" fill="#757575"/></svg>
<div class="t" style="top:573px;font-size:17.5px;color:#212121;left:64.60px;">Dedicated</div>
<div class="t" style="top:595px;font-size:15.35px;color:#7e7e7e;left:64.60px;">Using 0 out of 0 allowed</div>
<svg style="left:13.9px;top:655.50px" width="26.4" height="26.4" viewBox="0 0 24 24"><path d="M16 11c1.66 0 2.99-1.34 2.99-3S17.66 5 16 5c-1.66 0-3 1.34-3 3s1.34 3 3 3zm-8 0c1.66 0 2.99-1.34 2.99-3S9.66 5 8 5C6.34 5 5 6.34 5 8s1.34 3 3 3zm0 2c-2.33 0-7 1.17-7 3.500V19h14v-2.500c0-2.330-4.670-3.500-7-3.500zm8 0c-.29 0-.62.02-.97.05 1.16.84 1.970 1.970 1.970 3.450V19h6v-2.500c0-2.330-4.670-3.500-7-3.500z" fill="#757575"/></svg>
<div class="t" style="top:652px;font-size:17.5px;color:#212121;left:64.60px;">Shared</div>
<div class="t" style="top:674px;font-size:15.35px;color:#7e7e7e;left:64.60px;">Using 0 out of 0 allowed</div>
<svg style="left:13.6px;top:734.70px" width="26.4" height="26.4" viewBox="0 0 24 24"><path d="M12 12c2.21 0 4-1.79 4-4s-1.79-4-4-4-4 1.79-4 4 1.79 4 4 4zm0 2c-2.67 0-8 1.34-8 4v2h16v-2c0-2.66-5.33-4-8-4z" fill="#757575"/></svg>
<div class="t" style="top:731px;font-size:17.5px;color:#212121;left:64.60px;">Shadowsocks Proxies</div>
<div class="t" style="top:753px;font-size:15.35px;color:#7e7e7e;left:64.60px;">Using 0 out of 0 allowed</div>
<svg style="left:13.6px;top:814.20px" width="26.4" height="26.4" viewBox="0 0 24 24"><path d="M12 12c2.21 0 4-1.79 4-4s-1.79-4-4-4-4 1.79-4 4 1.79 4 4 4zm0 2c-2.67 0-8 1.34-8 4v2h16v-2c0-2.66-5.33-4-8-4z" fill="#757575"/></svg>
<div class="t" style="top:811px;font-size:17.5px;color:#212121;left:64.60px;">Trojan Proxies</div>
<div class="t" style="top:833px;font-size:15.35px;color:#7e7e7e;left:64.60px;">Using 0 out of 0 allowed</div>
<div style="left:0;top:870.8px;width:311px;height:40px;background:#fff"></div>
<svg style="left:13.2px;top:896.5px" width="5" height="7" viewBox="0 0 5 7"><path d="M.3 .3 L4.7 3.5 L.3 6.7 Z" fill="#555"/></svg>
<div class="t" style="top:891px;font-size:19.8px;color:#222;left:25.00px;">Rotating Proxies</div>
<div style="left:311px;top:0;width:15px;height:905px;background:#fdfdfd"></div>
<div style="left:314px;top:17px;width:9px;height:581px;border-radius:4.5px;background:#8b8b8b"></div>
<svg style="left:313.1px;top:3.1px" width="10" height="8.4" viewBox="0 0 10 8" preserveAspectRatio="none"><path d="M5 .6 L9.4 6.4 Q9.6 7.6 8.6 7.6 L1.4 7.6 Q.4 7.6 .6 6.4 Z" fill="#8b8b8b"/></svg>
<svg style="left:313.5px;top:899px" width="10" height="8" viewBox="0 0 10 8"><path d="M5 7.4 L9.4 1.6 Q9.6 .4 8.6 .4 L1.4 .4 Q.4 .4 .6 1.6 Z" fill="#8b8b8b"/></svg>
<div class="red" style="left:-1px;top:346px;width:315px;height:74px"></div>
</body></html>
